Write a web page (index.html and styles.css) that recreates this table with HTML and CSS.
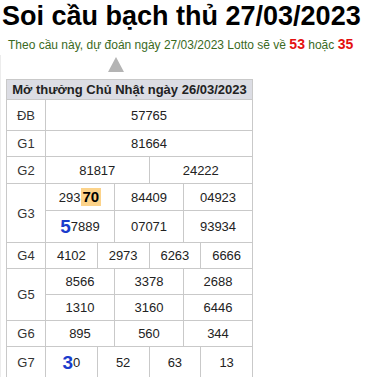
FILE: index.html
```html
<!DOCTYPE html>
<html lang="vi">
<head>
<meta charset="utf-8">
<title>Soi cầu bạch thủ 27/03/2023</title>
<link rel="stylesheet" href="styles.css">
</head>
<body>
<h1 class="title">Soi cầu bạch thủ 27/03/2023</h1>
<p class="lead">Theo cầu này, dự đoán ngày 27/03/2023 Lotto sẽ về <b class="hot">53</b> hoặc <b class="hot">35</b></p>
<div class="panel">
  <div class="arrow-row"><span class="arrow"></span></div>
  <div class="results">
    <div class="head">Mở thưởng Chủ Nhật ngày 26/03/2023</div>

    <div class="lbl r-db">ĐB</div>
    <div class="cell c12 r-db">57765</div>

    <div class="lbl r-g1">G1</div>
    <div class="cell c12 r-g1">81664</div>

    <div class="lbl r-g2">G2</div>
    <div class="cell c6 r-g2">81817</div>
    <div class="cell c6 r-g2">24222</div>

    <div class="lbl r-g3a span2">G3</div>
    <div class="cell c4 r-g3a">293<span class="mark">70</span></div>
    <div class="cell c4 r-g3a">84409</div>
    <div class="cell c4 r-g3a">04923</div>
    <div class="cell c4 r-g3b"><span class="big">5</span>7889</div>
    <div class="cell c4 r-g3b">07071</div>
    <div class="cell c4 r-g3b">93934</div>

    <div class="lbl r-g4">G4</div>
    <div class="cell c3 r-g4">4102</div>
    <div class="cell c3 r-g4">2973</div>
    <div class="cell c3 r-g4">6263</div>
    <div class="cell c3 r-g4">6666</div>

    <div class="lbl r-g5a span2">G5</div>
    <div class="cell c4 r-g5a">8566</div>
    <div class="cell c4 r-g5a">3378</div>
    <div class="cell c4 r-g5a">2688</div>
    <div class="cell c4 r-g5b">1310</div>
    <div class="cell c4 r-g5b">3160</div>
    <div class="cell c4 r-g5b">6446</div>

    <div class="lbl r-g6">G6</div>
    <div class="cell c4 r-g6">895</div>
    <div class="cell c4 r-g6">560</div>
    <div class="cell c4 r-g6">344</div>

    <div class="lbl r-g7">G7</div>
    <div class="cell c3 r-g7"><span class="big">3</span>0</div>
    <div class="cell c3 r-g7">52</div>
    <div class="cell c3 r-g7">63</div>
    <div class="cell c3 r-g7">13</div>
  </div>
</div>
</body>
</html>
```

FILE: styles.css
```css
html, body {
  margin: 0;
  padding: 0;
  background: #fff;
}

body {
  font-family: "Liberation Sans", Arial, sans-serif;
  color: #222;
}

.title {
  margin: 1px 0 0 2px;
  font-size: 27px;
  line-height: 31px;
  font-weight: bold;
  color: #000;
}

.lead {
  margin: 4px 0 0 8px;
  font-size: 12px;
  line-height: 16px;
  color: #3a6a1e;
}

.hot {
  color: #e41010;
  font-size: 14px;
}

.panel {
  margin-top: 2px;
  border-left: 1px solid #ececec;
}

.arrow-row {
  display: flex;
  padding: 2px 0 0 107px;
  height: 22px;
}

.arrow {
  width: 0;
  height: 0;
  border-left: 8px solid transparent;
  border-right: 8px solid transparent;
  border-bottom: 15px solid #b4b4b4;
}

.results {
  margin-left: 5px;
  width: 245px;
  display: grid;
  grid-template-columns: 38px repeat(12, 1fr);
  grid-template-rows: 19px 30px 25px 26px 26px 31px 25px 25px 25px 25px 31px;
  gap: 1px;
  padding: 1px;
  background: #c9c9c9;
  font-size: 13px;
}

.head {
  grid-column: 1 / -1;
  background: #dcdde4;
  color: #222;
  font-weight: bold;
  display: flex;
  align-items: center;
  justify-content: center;
}

.lbl,
.cell {
  background: #fff;
  display: flex;
  align-items: center;
  justify-content: center;
}

.lbl {
  grid-column: 1;
  color: #333;
}

.span2 { grid-row-end: span 2; }

.c12 { grid-column-end: span 12; }
.c6 { grid-column-end: span 6; }
.c4 { grid-column-end: span 4; }
.c3 { grid-column-end: span 3; }

.r-db { grid-row-start: 2; }
.r-g1 { grid-row-start: 3; }
.r-g2 { grid-row-start: 4; }
.r-g3a { grid-row-start: 5; }
.r-g3b { grid-row-start: 6; }
.r-g4 { grid-row-start: 7; }
.r-g5a { grid-row-start: 8; }
.r-g5b { grid-row-start: 9; }
.r-g6 { grid-row-start: 10; }
.r-g7 { grid-row-start: 11; }

.mark {
  background: #fcd38a;
  color: #000;
  font-weight: bold;
  font-size: 15px;
  line-height: 18px;
  padding: 0 2px;
}

.big {
  color: #1a3dcc;
  font-weight: bold;
  font-size: 19px;
  line-height: 20px;
}
```
